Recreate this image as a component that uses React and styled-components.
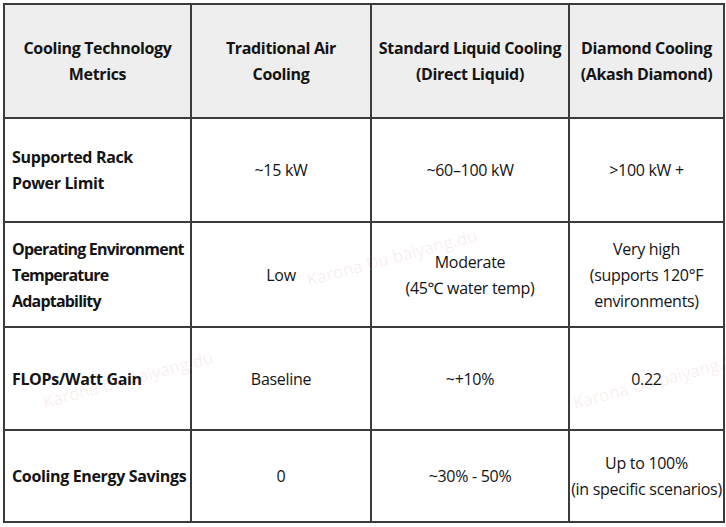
import React from "react";
import styled, { createGlobalStyle } from "styled-components";

const Global = createGlobalStyle`
  html, body { margin: 0; padding: 0; background: #ffffff; }
  body { font-family: "Open Sans", "Noto Sans", "Liberation Sans", sans-serif; }
`;

const Page = styled.div`
  position: relative;
  width: 726px;
  height: 527px;
  padding: 3px 0 0 3px;
  box-sizing: border-box;
  overflow: hidden;
  background: #ffffff;
`;

const Table = styled.table`
  border-collapse: collapse;
  table-layout: fixed;
  width: 720px;
  color: #141414;
  font-size: 16px;
  line-height: 26px;
`;

const HeadCell = styled.th`
  border: 2px solid #3b3b3b;
  background: #eeeeee;
  font-weight: 700;
  text-align: center;
  vertical-align: middle;
  padding: 0;
  height: ${(p) => p.$h}px;
  box-sizing: border-box;
  white-space: nowrap;
  letter-spacing: -0.35px;
`;

const MetricCell = styled.th`
  border: 2px solid #3b3b3b;
  font-weight: 700;
  text-align: left;
  vertical-align: middle;
  padding: 0 0 0 7px;
  height: ${(p) => p.$h}px;
  box-sizing: border-box;
  white-space: nowrap;
  letter-spacing: ${(p) => (p.$tight ? "-0.8px" : "-0.35px")};
`;

const ValueCell = styled.td`
  border: 2px solid #3b3b3b;
  font-weight: 400;
  text-align: center;
  vertical-align: middle;
  padding: 0;
  box-sizing: border-box;
  white-space: nowrap;
  letter-spacing: -0.3px;
`;

const Watermark = styled.span`
  position: absolute;
  left: ${(p) => p.$x}px;
  top: ${(p) => p.$y}px;
  transform: rotate(-15deg);
  transform-origin: left bottom;
  font-family: "Open Sans", sans-serif;
  font-size: 17px;
  color: rgba(215, 150, 150, 0.16);
  white-space: nowrap;
  pointer-events: none;
`;

const cols = [187, 180, 198, 155];

const rows = [
  { h: 104, metric: ["Supported Rack", "Power Limit"], vals: [["~15 kW"], ["~60–100 kW"], [">100 kW +"]] },
  {
    h: 105,
    tight: true,
    metric: ["Operating Environment", "Temperature", "Adaptability"],
    vals: [["Low"], ["Moderate", "(45℃ water temp)"], ["Very high", "(supports 120°F", "environments)"]],
  },
  { h: 103, metric: ["FLOPs/Watt Gain"], vals: [["Baseline"], ["~+10%"], ["0.22"]] },
  {
    h: 92,
    metric: ["Cooling Energy Savings"],
    vals: [["0"], ["~30% - 50%"], ["Up to 100%", "(in specific scenarios)"]],
  },
];

const Lines = ({ lines }) =>
  lines.map((l, i) => (
    <React.Fragment key={i}>
      {i > 0 && <br />}
      {l}
    </React.Fragment>
  ));

export default function App() {
  return (
    <>
      <Global />
      <Page>
        <Table>
          <colgroup>
            {cols.map((w, i) => (
              <col key={i} style={{ width: w }} />
            ))}
          </colgroup>
          <thead>
            <tr>
              <HeadCell $h={114}><Lines lines={["Cooling Technology", "Metrics"]} /></HeadCell>
              <HeadCell $h={114}><Lines lines={["Traditional Air", "Cooling"]} /></HeadCell>
              <HeadCell $h={114}><Lines lines={["Standard Liquid Cooling", "(Direct Liquid)"]} /></HeadCell>
              <HeadCell $h={114}><Lines lines={["Diamond Cooling", "(Akash Diamond)"]} /></HeadCell>
            </tr>
          </thead>
          <tbody>
            {rows.map((r, i) => (
              <tr key={i}>
                <MetricCell $h={r.h} $tight={r.tight}><Lines lines={r.metric} /></MetricCell>
                {r.vals.map((v, j) => (
                  <ValueCell key={j}><Lines lines={v} /></ValueCell>
                ))}
              </tr>
            ))}
          </tbody>
        </Table>
        <Watermark $x={46} $y={390}>Karona Du baiyang.du</Watermark>
        <Watermark $x={310} $y={268}>Karona Du baiyang.du</Watermark>
        <Watermark $x={576} $y={391}>Karona Du baiyang.du</Watermark>
      </Page>
    </>
  );
}
